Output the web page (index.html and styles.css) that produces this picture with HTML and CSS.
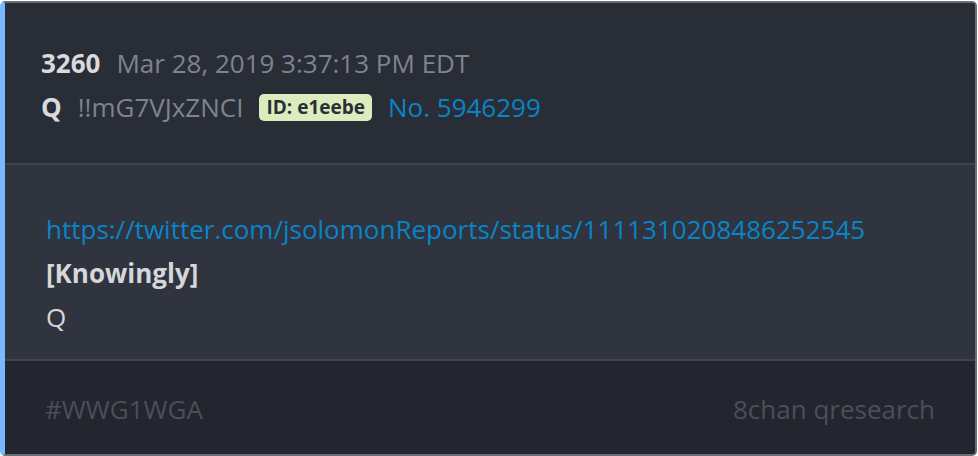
FILE: index.html
```html
<!DOCTYPE html>
<html>
<head>
<meta charset="utf-8">
<link rel="stylesheet" href="styles.css">
</head>
<body>
<div class="card">
  <div class="head">
    <div class="line"><span class="num">3260</span><span class="date">Mar 28, 2019 3:37:13 PM EDT</span></div>
    <div class="line"><span class="name">Q</span><span class="trip">!!mG7VJxZNCI</span><span class="id">ID: e1eebe</span><span class="no">No. 5946299</span></div>
  </div>
  <div class="body">
    <div class="line"><a class="link" href="#">https://twitter.com/jsolomonReports/status/1111310208486252545</a></div>
    <div class="line"><b class="strong">[Knowingly]</b></div>
    <div class="line">Q</div>
  </div>
  <div class="foot">
    <span>#WWG1WGA</span>
    <span>8chan qresearch</span>
  </div>
</div>
</body>
</html>
```
FILE: styles.css
```css
html, body {
  margin: 0;
  padding: 0;
  background: #ffffff;
}
body {
  width: 978px;
  height: 456px;
  font-family: "Open Sans", "Noto Sans", sans-serif;
}
.card {
  margin-top: 1px;
  width: 977px;
  height: 455px;
  box-sizing: border-box;
  border: 2px solid #6a6e77;
  border-left: 5px solid #7ab8ff;
  border-radius: 5px;
  overflow: hidden;
  display: flex;
  flex-direction: column;
  background: #23262e;
}
.head {
  background: #292d36;
  padding: 38px 36px 34px;
  border-bottom: 2px solid #40444d;
}
.line {
  height: 44px;
  line-height: 44px;
  font-size: 26px;
  white-space: nowrap;
  display: flex;
  align-items: center;
}
.num {
  font-weight: 700;
  color: #d8dadd;
  margin-right: 16px;
}
.date {
  color: #7e8391;
}
.name {
  font-weight: 700;
  color: #d8dadd;
  margin-right: 16px;
}
.trip {
  color: #7e8391;
  margin-right: 16px;
}
.id {
  background: #ddecbe;
  color: #2a2e37;
  font-weight: 700;
  font-size: 19px;
  line-height: 27px;
  height: 27px;
  padding: 0 7px;
  border-radius: 5px;
  margin-right: 16px;
}
.no {
  color: #0a84c8;
}
.body {
  background: #2f343e;
  padding: 42px 41px 20px;
  border-bottom: 2px solid #40444d;
  color: #d5d7da;
}
.link {
  color: #0a84c8;
  text-decoration: none;
}
.strong {
  font-weight: 700;
  color: #d5d7da;
}
.foot {
  flex: 1;
  background: #23262e;
  display: flex;
  justify-content: space-between;
  align-items: center;
  padding: 2px 40px 0 40px;
  font-size: 26px;
  font-weight: 400;
  color: #4a4f5a;
}
```
